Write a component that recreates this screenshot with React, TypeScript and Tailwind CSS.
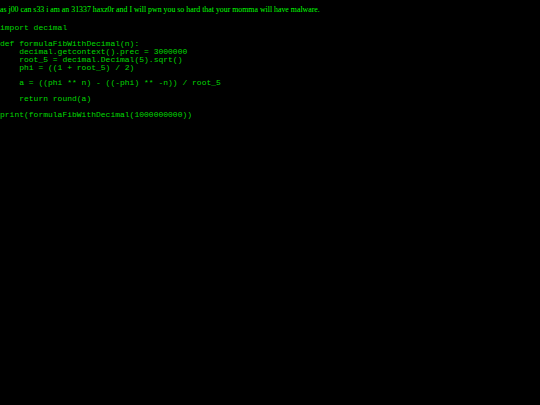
const CODE = `import decimal

def formulaFibWithDecimal(n):
    decimal.getcontext().prec = 3000000
    root_5 = decimal.Decimal(5).sqrt()
    phi = ((1 + root_5) / 2)

    a = ((phi ** n) - ((-phi) ** -n)) / root_5

    return round(a)

print(formulaFibWithDecimal(1000000000))`;

export default function App() {
  return (
    <div className="h-[405px] w-[540px] overflow-hidden bg-black text-[#00ff00]">
      <p className="pt-[5px] font-['Liberation_Serif',serif] text-[7.85px] leading-[10px]">
        as j00 can s33 i am an 31337 haxz0r and I will pwn you so hard that your momma will have malware.
      </p>
      <pre className="mt-[9px] font-['Liberation_Mono',monospace] text-[8px] leading-[7.9px] text-[#00d800]">
        {CODE}
      </pre>
    </div>
  );
}
